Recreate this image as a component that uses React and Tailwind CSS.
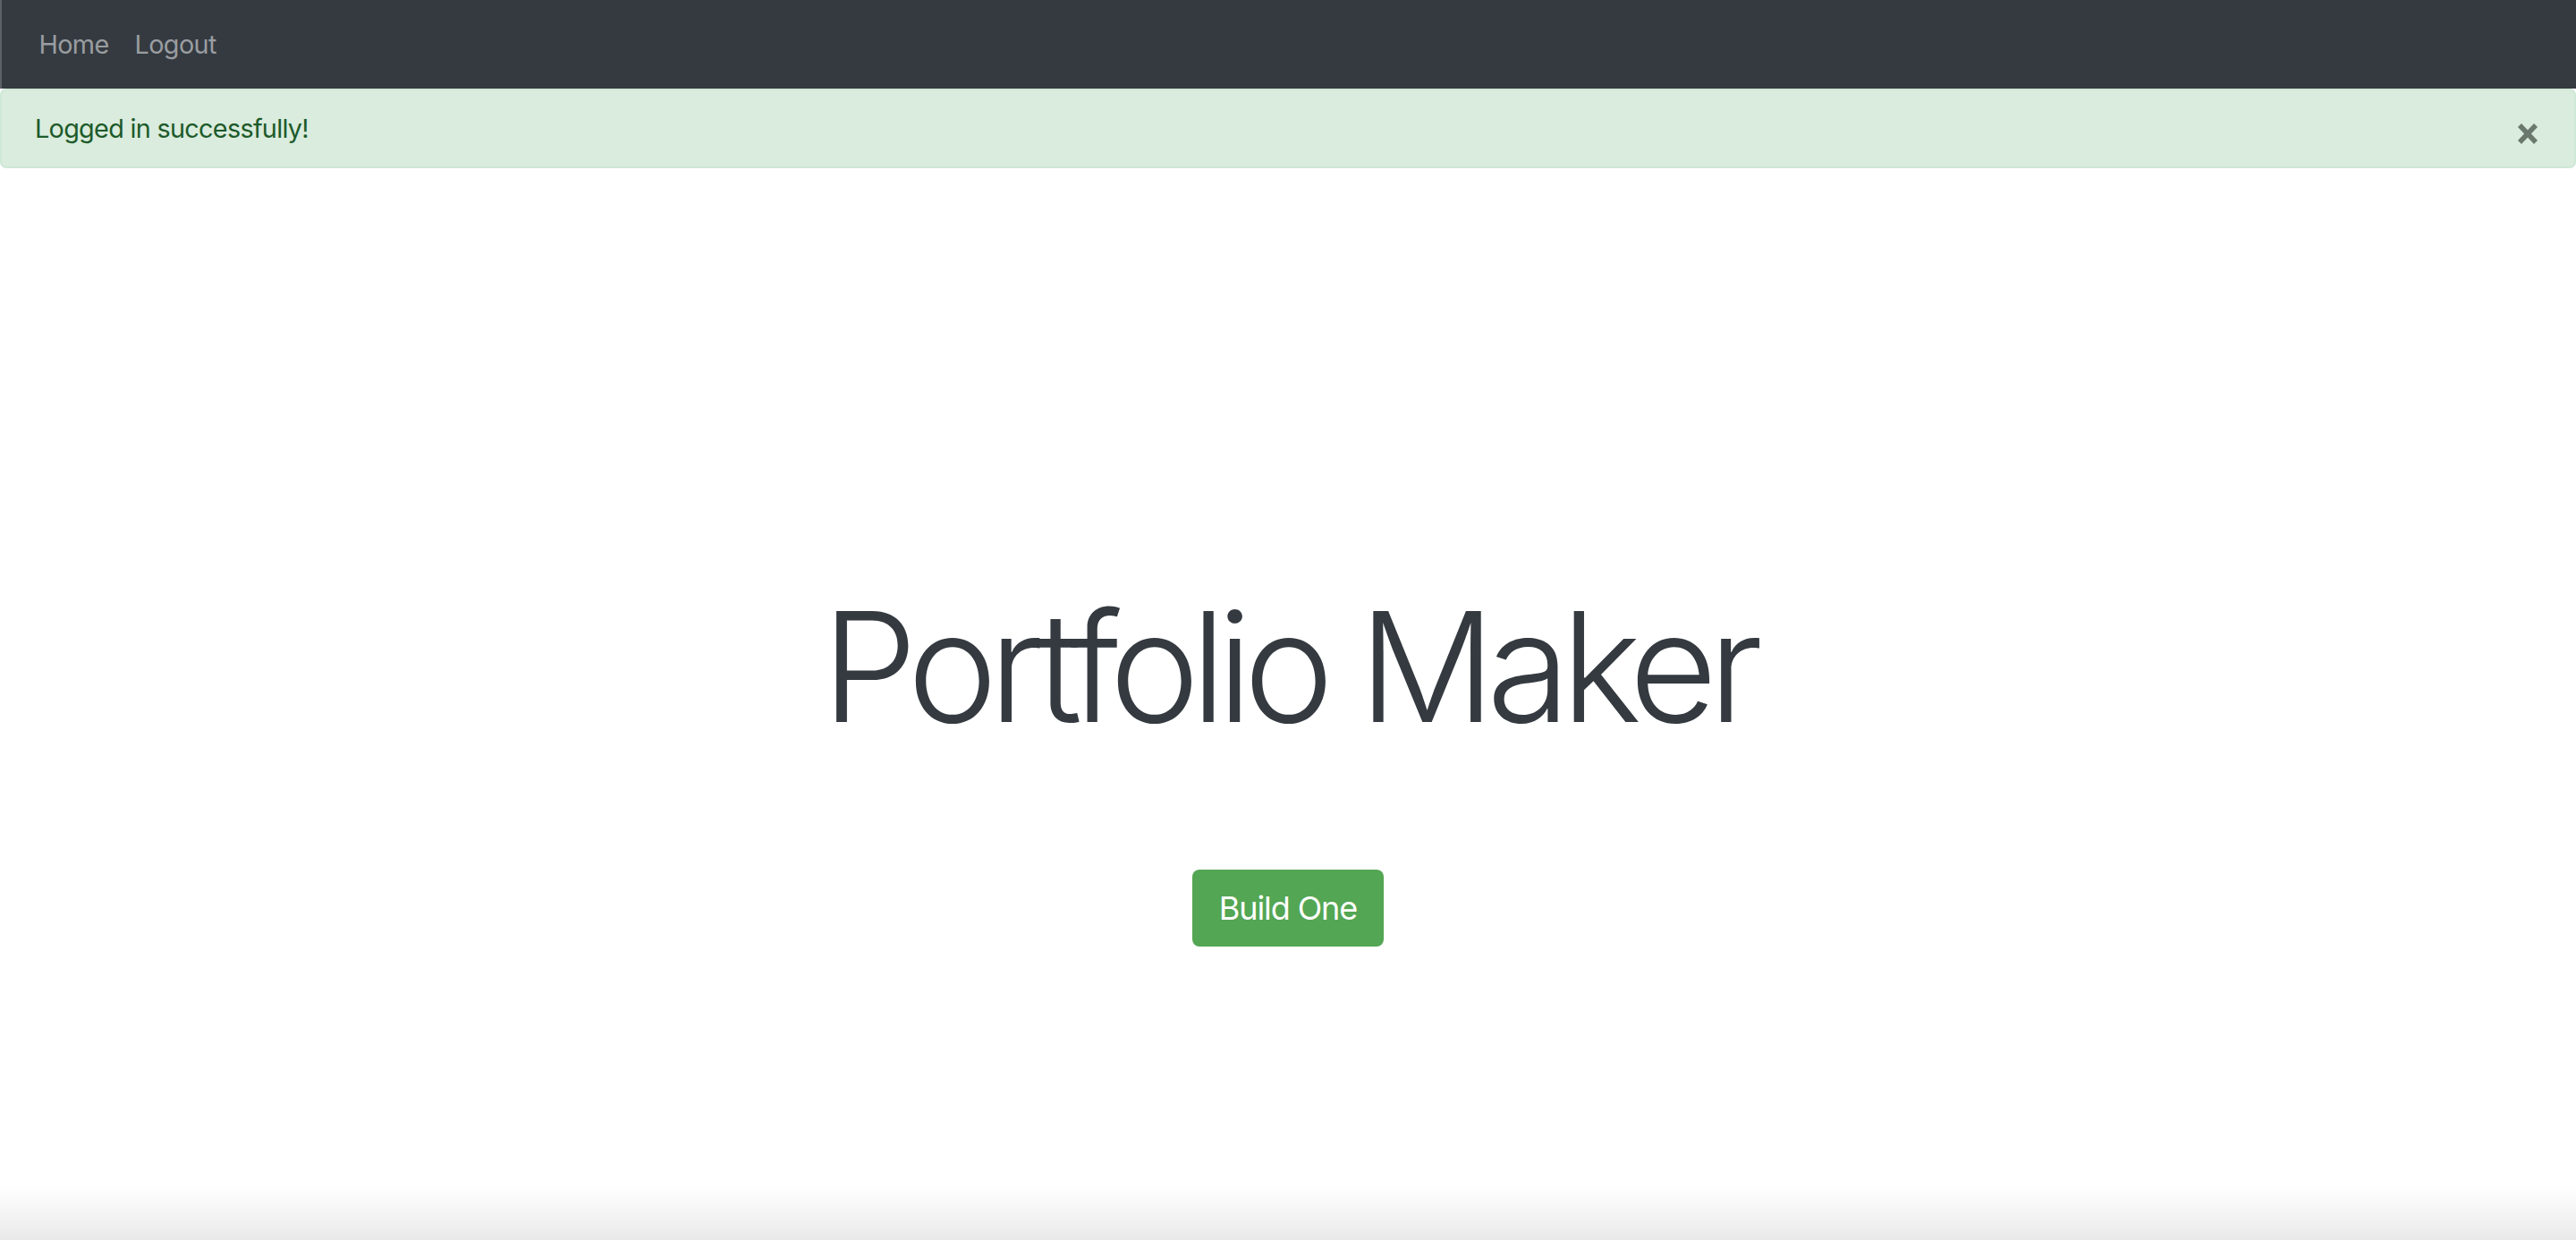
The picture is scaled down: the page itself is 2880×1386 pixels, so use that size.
export default function App() {
  return (
    <div className="relative w-[2880px] h-[1386px] overflow-hidden bg-white" style={{ fontFamily: 'Inter, "Noto Sans", sans-serif' }}>
      <nav className="h-[99px] bg-[#343a40] border-l-2 border-[#5d6166] flex items-center px-[27px]">
        <a className="px-[14.4px] text-[28.8px] leading-[43px] tracking-[-0.6px] text-[#9a9da0]">Home</a>
        <a className="px-[14.4px] text-[28.8px] leading-[43px] tracking-[-0.6px] text-[#9a9da0]">Logout</a>
      </nav>
      <div className="relative h-[89px] bg-[#d9ecdd] border-[2px] border-[#cfe7d5] rounded-[7px] flex items-center pl-[37px] text-[#1d5a2a] text-[28.8px] tracking-[-0.7px]">
        <span>Logged in successfully!</span>
        <button className="absolute right-[41px] top-[37px] w-[22px] h-[23px]">
          <svg viewBox="0 0 22 23" width="22" height="23">
            <line x1="2" y1="2" x2="20" y2="21" stroke="#6b786e" strokeWidth="5.5" />
            <line x1="20" y1="2" x2="2" y2="21" stroke="#6b786e" strokeWidth="5.5" />
          </svg>
        </button>
      </div>
      <main className="flex flex-col items-center pt-[455px]">
        <h1 className="text-[170px] leading-[1.2] font-light text-[#343a40] tracking-[-10px]">Portfolio Maker</h1>
        <button className="mt-[125px] w-[214px] h-[86px] rounded-[8px] bg-[#53a653] text-white text-[36px] leading-[54px] tracking-[-1.1px]">Build One</button>
      </main>
      <div className="absolute left-0 right-0 bottom-0 h-[60px] bg-gradient-to-b from-transparent to-[#e9e9e9]"></div>
    </div>
  );
}
